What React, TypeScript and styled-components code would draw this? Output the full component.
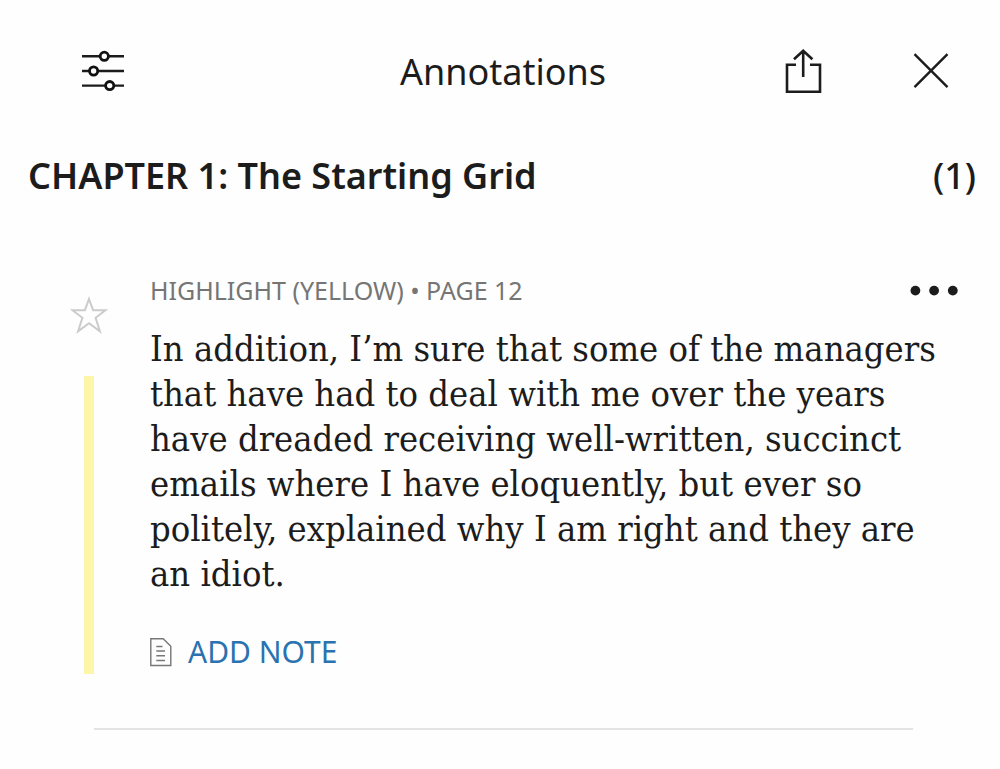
import React from "react";
import styled, { createGlobalStyle } from "styled-components";

const GlobalStyle = createGlobalStyle`
  *, *::before, *::after { box-sizing: border-box; }
  body {
    margin: 0;
    background: #fefefe;
    color: #1c1c1c;
    font-family: "Noto Sans", "Open Sans", sans-serif;
  }
`;

const Page = styled.main`
  padding-top: 40px;
`;

const Header = styled.header`
  display: grid;
  grid-template-columns: 1fr auto 1fr;
  align-items: center;
  height: 64px;
  padding: 0 50px 0 80px;
`;

const Title = styled.h1`
  margin: 0 24px 0 0;
  font-size: 36px;
  line-height: 48px;
  font-weight: 400;
`;

const Actions = styled.div`
  display: flex;
  justify-content: flex-end;
  gap: 90px;
`;

const IconButton = styled.button`
  display: flex;
  padding: 0;
  border: 0;
  background: none;
  color: inherit;
  cursor: pointer;
  justify-self: start;
  align-items: center;

  svg { display: block; }
`;

const ChapterRow = styled.div`
  display: flex;
  justify-content: space-between;
  align-items: center;
  margin-top: 48px;
  padding: 0 24px 0 28px;
  line-height: 48px;
`;

const ChapterTitle = styled.h2`
  margin: 0;
  font-size: 36px;
  font-weight: 600;
`;

const Count = styled.span`
  font-size: 36px;
  font-weight: 500;
`;

const Annotation = styled.article`
  display: grid;
  grid-template-columns: 38px 1fr;
  column-gap: 42px;
  margin-top: 72px;
  padding: 0 40px 0 70px;
`;

const Rail = styled.div`
  display: flex;
  flex-direction: column;
  align-items: center;
  padding-top: 24px;
`;

const Marker = styled.div`
  flex: 1;
  width: 10px;
  margin-top: 42px;
  background: #fdf6a8;
`;

const Meta = styled.div`
  display: flex;
  justify-content: space-between;
  align-items: center;
  color: #757575;
  font-size: 25px;
  line-height: 36px;
`;

const Quote = styled.blockquote`
  margin: 18px 0 0;
  font-family: "DejaVu Serif Condensed", "DejaVu Serif", serif;
  font-size: 36px;
  line-height: 45px;
`;

const NoteButton = styled(IconButton)`
  gap: 16px;
  margin-top: 34px;
  color: #2a72b0;
  font-family: inherit;
  font-size: 30px;
  line-height: 44px;
`;

const Divider = styled.hr`
  height: 2px;
  margin: 54px 87px 0 94px;
  border: 0;
  background: #e3e3e3;
`;

const FilterIcon = () => (
  <svg width="46" height="44" viewBox="0 0 46 44" fill="#fefefe" stroke="#111" strokeWidth="2.8" aria-hidden="true">
    <path d="M2 6.3H44M2 21H44M2 35.6H44" stroke="#1c1c1c" strokeWidth="2.4" />
    <circle cx="24.3" cy="6.3" r="4.1" />
    <circle cx="13.6" cy="21" r="4.1" />
    <circle cx="29.7" cy="35.6" r="4.1" />
  </svg>
);

const ShareIcon = () => (
  <svg width="38" height="46" viewBox="0 0 38 46" fill="none" stroke="currentColor" strokeWidth="2.6" aria-hidden="true">
    <path d="M12 15.8H3V42.8H36V15.8H26" />
    <path d="M19.2 28V2M10 10.3L19.2 1.8L28.4 10.3" />
  </svg>
);

const CloseIcon = () => (
  <svg width="38" height="46" viewBox="0 0 38 46" fill="none" stroke="currentColor" strokeWidth="2.4" aria-hidden="true">
    <path d="M2.5 5.2L35.5 38.2M35.5 5.2L2.5 38.2" />
  </svg>
);

const StarIcon = () => (
  <svg width="38" height="38" viewBox="0 0 38 38" fill="none" stroke="#cbcbcb" strokeWidth="2" aria-hidden="true">
    <path d="M19 3L23.1 14.2H35.5L25.6 21.8L29.9 35.3L19 27.3L8.1 35.3L12.4 21.8L2.5 14.2H14.9Z" />
  </svg>
);

const MoreIcon = () => (
  <svg width="50" height="12" viewBox="0 0 50 12" fill="#1c1c1c" aria-hidden="true">
    <circle cx="5.4" cy="6.6" r="4.9" />
    <circle cx="24.1" cy="6.6" r="4.9" />
    <circle cx="42.8" cy="6.6" r="4.9" />
  </svg>
);

const NoteIcon = () => (
  <svg width="22" height="30" viewBox="0 0 22 30" fill="none" stroke="#777" strokeWidth="1.4" aria-hidden="true">
    <path d="M.8 1.7H13.2L20.8 9.3V28.5H.8Z" />
    <path d="M6.3 9.5H12.5M6.3 14H15M6.3 18.8H15M6.3 23.5H15" />
  </svg>
);

export default function App() {
  return (
    <>
      <GlobalStyle />
      <Page>
        <Header>
          <IconButton type="button" aria-label="Filter annotations"><FilterIcon /></IconButton>
          <Title>Annotations</Title>
          <Actions>
            <IconButton type="button" aria-label="Share"><ShareIcon /></IconButton>
            <IconButton type="button" aria-label="Close"><CloseIcon /></IconButton>
          </Actions>
        </Header>
        <ChapterRow>
          <ChapterTitle>CHAPTER 1: The Starting Grid</ChapterTitle>
          <Count>(1)</Count>
        </ChapterRow>
        <Annotation>
          <Rail>
            <IconButton type="button" aria-label="Star this highlight"><StarIcon /></IconButton>
            <Marker />
          </Rail>
          <div>
            <Meta>
              <span>HIGHLIGHT (YELLOW) • PAGE 12</span>
              <IconButton type="button" aria-label="More options"><MoreIcon /></IconButton>
            </Meta>
            <Quote>
              In addition, I’m sure that some of the managers that have had to deal with me over the
              years have dreaded receiving well-written, succinct emails where I have eloquently, but
              ever so politely, explained why I am right and they are an idiot.
            </Quote>
            <NoteButton type="button"><NoteIcon />ADD NOTE</NoteButton>
          </div>
        </Annotation>
        <Divider />
      </Page>
    </>
  );
}
